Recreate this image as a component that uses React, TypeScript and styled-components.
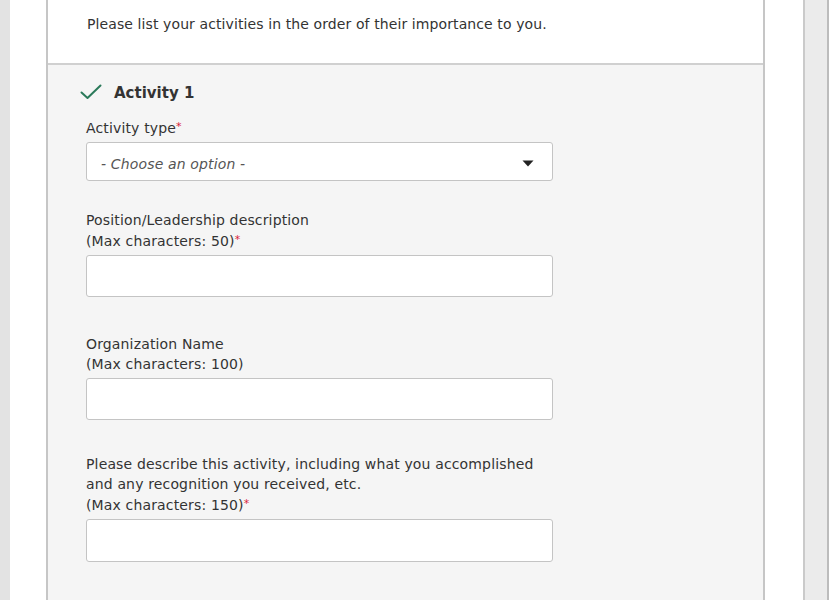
import React from 'react';
import styled, { createGlobalStyle } from 'styled-components';

const GlobalStyle = createGlobalStyle`
  html, body {
    margin: 0;
    padding: 0;
    background: #ffffff;
    font-family: 'DejaVu Sans', Verdana, sans-serif;
    color: #333333;
  }
  * {
    box-sizing: border-box;
  }
`;

type FieldType = {
  lines: string[],
  required?: boolean,
  spaceBefore: number,
  height: number,
};

const fields: FieldType[] = [
  { lines: ['Position/Leadership description', '(Max characters: 50)'], required: true, spaceBefore: 29, height: 42 },
  { lines: ['Organization Name', '(Max characters: 100)'], spaceBefore: 37, height: 42 },
  {
    lines: [
      'Please describe this activity, including what you accomplished',
      'and any recognition you received, etc.',
      '(Max characters: 150)',
    ],
    required: true,
    spaceBefore: 34,
    height: 43,
  },
];

const CheckIcon = () => (
  <svg width="22" height="16" viewBox="0 0 22 16">
    <path d="M1.5 8.5 L7.5 14 L20.5 1.5" fill="none" stroke="#2b7a5a" strokeWidth="2" strokeLinecap="round" strokeLinejoin="round" />
  </svg>
);

const Caret = () => (
  <svg width="12" height="7" viewBox="0 0 12 7">
    <path d="M0.5 0.5 L11.5 0.5 L6 6.5 Z" fill="#222222" />
  </svg>
);

export default function App() {
  return (
    <Page>
      <GlobalStyle />
      <Gutter />
      <Main>
        <Card>
          <Intro>Please list your activities in the order of their importance to you.</Intro>
          <Section>
            <SectionTitle>
              <CheckIcon />
              <span>Activity 1</span>
            </SectionTitle>
            <Field spaceBefore={14}>
              <Label>
                Activity type<Star>*</Star>
              </Label>
              <Select>
                <Placeholder>- Choose an option -</Placeholder>
                <Caret />
              </Select>
            </Field>
            {fields.map((field, i) => (
              <Field key={i} spaceBefore={field.spaceBefore}>
                <Label>
                  {field.lines.map((line, j) => (
                    <div key={j}>
                      {line}
                      {field.required && j === field.lines.length - 1 ? <Star>*</Star> : null}
                    </div>
                  ))}
                </Label>
                <TextInput style={{ height: field.height }} />
              </Field>
            ))}
          </Section>
        </Card>
        <Scrollbar />
      </Main>
    </Page>
  );
}

const Page = styled.div`
  display: flex;
  width: 830px;
  height: 600px;
  overflow: hidden;
`;

const Gutter = styled.div`
  width: 10px;
  background: #e3e3e3;
`;

const Main = styled.div`
  flex: 1;
  display: flex;
  padding-left: 36px;
  background: #ffffff;
`;

const Card = styled.div`
  width: 719px;
  height: 600px;
  border-left: 2px solid #c6c6c6;
  border-right: 2px solid #c6c6c6;
  display: flex;
  flex-direction: column;
`;

const Intro = styled.div`
  height: 65px;
  padding: 14px 0 0 39px;
  font-size: 14px;
  letter-spacing: 0.1px;
  line-height: 20px;
  background: #ffffff;
  border-bottom: 2px solid #d0d0d0;
`;

const Section = styled.div`
  flex: 1;
  background: #f5f5f5;
  padding: 18px 0 0 38px;
`;

const SectionTitle = styled.div`
  display: flex;
  align-items: center;
  gap: 12px;
  margin-left: -6px;
  font-size: 15px;
  font-weight: 600;
  color: #333333;
  height: 20px;

  > svg {
    margin-top: -2px;
  }
`;

const Field = styled.div<{ spaceBefore: number }>`
  margin-top: ${(props) => props.spaceBefore}px;
  width: 467px;
`;

const Label = styled.div`
  font-size: 14px;
  letter-spacing: 0.15px;
  line-height: 20px;
  color: #333333;
  margin-bottom: 4px;
`;

const Star = styled.span`
  color: #d9223a;
  font-size: 11px;
  vertical-align: 3px;
`;

const Select = styled.div`
  height: 39px;
  background: #ffffff;
  border: 1px solid #c4c4c4;
  border-radius: 3px;
  display: flex;
  align-items: center;
  justify-content: space-between;
  padding: 4px 18px 0 14px;
`;

const Placeholder = styled.span`
  font-style: italic;
  font-size: 14px;
  letter-spacing: 0.15px;
  color: #555555;
`;

const TextInput = styled.div`
  background: #ffffff;
  border: 1px solid #c4c4c4;
  border-radius: 3px;
`;

const Scrollbar = styled.div`
  margin-left: 38px;
  width: 26px;
  background: #ebebeb;
  border-left: 2px solid #cacaca;
  border-right: 2px solid #bcbcbc;
`;
